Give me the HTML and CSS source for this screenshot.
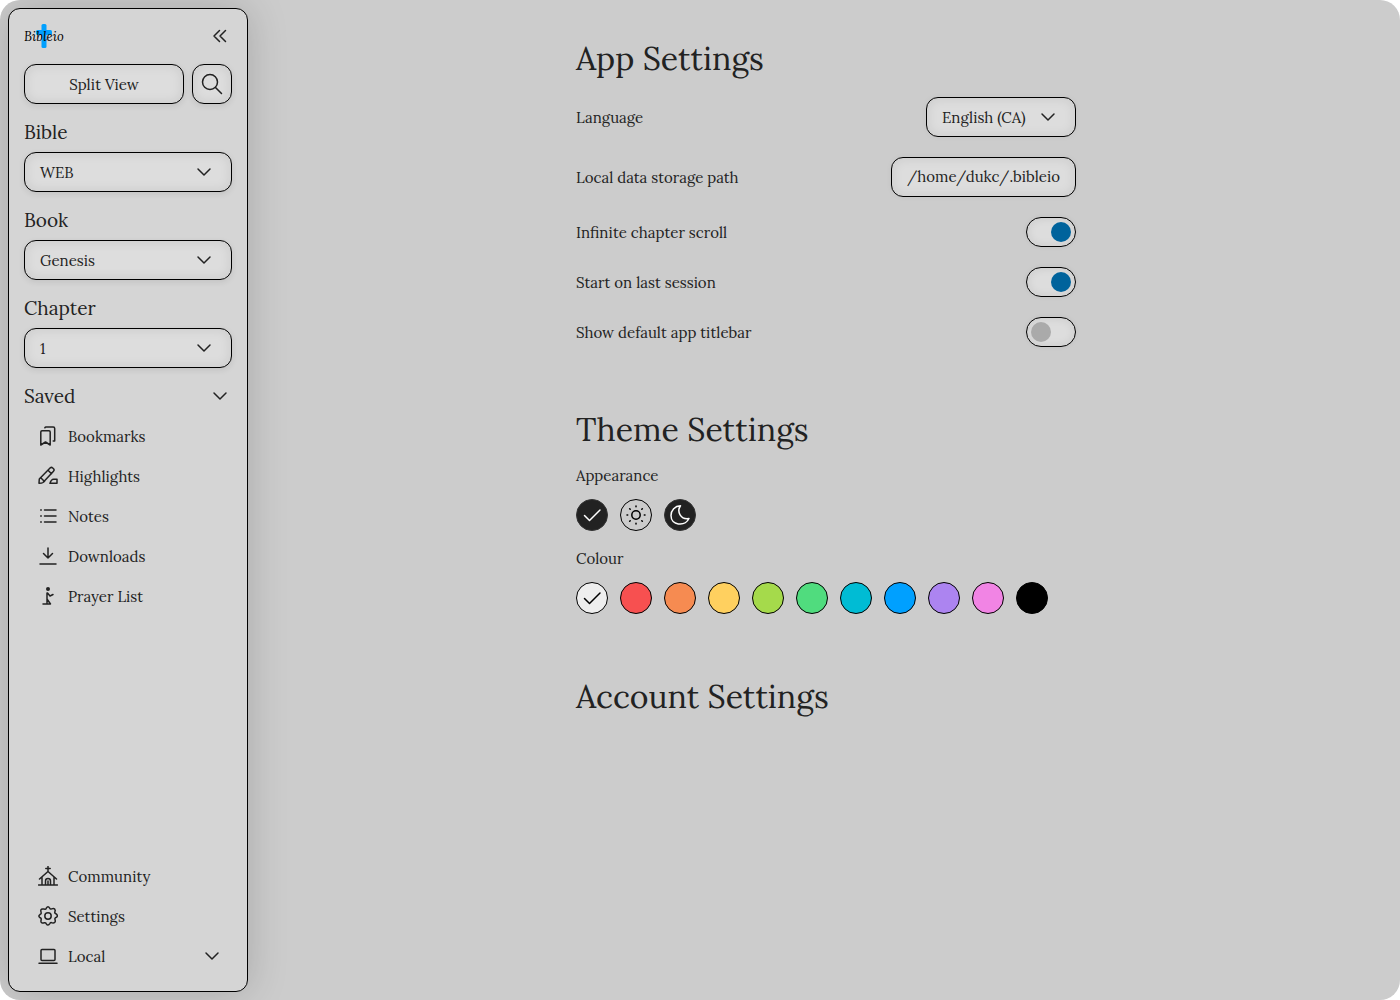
FILE: index.html
```html
<!DOCTYPE html>
<html lang="en">
<head>
<meta charset="utf-8">
<title>Bibleio</title>
<link rel="stylesheet" href="styles.css">
</head>
<body>
<svg class="defs" aria-hidden="true">
  <symbol id="chevron" viewBox="0 0 16 16"><path d="M2 5l6 6 6-6"/></symbol>
  <symbol id="check" viewBox="0 0 20 20"><path d="M2.500 10.500l5 5L18 5"/></symbol>
</svg>
<div class="app">
  <aside class="sidebar">
    <header class="brand">
      <div class="logo"><svg class="cross" viewBox="0 0 16 24"><rect x="5.500" width="5" height="24" rx="1.500"/><rect y="6" width="16" height="5" rx="1.500"/></svg><span>Bibleio</span></div>
      <svg class="icon collapse" viewBox="0 0 16 16"><path d="M7.500 2.500L2 8l5.500 5.500M13.500 2.500L8 8l5.500 5.500"/></svg>
    </header>
    <div class="actions">
      <button class="control split"><span>Split View</span></button>
      <button class="control search" aria-label="Search"><svg class="icon" viewBox="0 0 24 24"><circle cx="10" cy="10" r="7.500"/><path d="M15.500 15.500l6 6"/></svg></button>
    </div>
    <section class="field"><h2>Bible</h2><button class="control select"><span>WEB</span><svg class="icon chev"><use href="#chevron"/></svg></button></section>
    <section class="field"><h2>Book</h2><button class="control select"><span>Genesis</span><svg class="icon chev"><use href="#chevron"/></svg></button></section>
    <section class="field"><h2>Chapter</h2><button class="control select"><span>1</span><svg class="icon chev"><use href="#chevron"/></svg></button></section>
    <div class="saved"><h2>Saved</h2><svg class="icon chev"><use href="#chevron"/></svg></div>
    <nav class="menu">
      <a><svg class="icon" viewBox="0 0 20 20"><path d="M2.800 6q0-1.200 1.200-1.200h7q1.200 0 1.200 1.200v13l-4.700-3-4.700 3zM6.800 1.800q.4-.8 1.200-.8h7.200q1.500 0 1.500 1.500v12.400H15.200"/></svg><span>Bookmarks</span></a>
      <a><svg class="icon" viewBox="0 0 20 20"><path d="M1 17.300l.3-4.300L12.300 1.800q1.200-1 2.400.2l.8.800q1.200 1.200 0 2.400L5 16.500q-1 .8-4 .8zM10 4.200l3.500 3.500M2.500 11.500l4 4M12 17.300h7v-4h-3.500q-2.200 0-3.500 4z"/></svg><span>Highlights</span></a>
      <a><svg class="icon" viewBox="0 0 20 20"><path d="M6.500 4h11.500M6.500 10h11.500M6.500 16h11.500M2.700 4h.6M2.700 10h.6M2.700 16h.6"/></svg><span>Notes</span></a>
      <a><svg class="icon" viewBox="0 0 20 20"><path d="M10 2v10M5.500 7.500L10 12l4.500-4.500M2 18h16"/></svg><span>Downloads</span></a>
      <a><svg class="icon" viewBox="0 0 20 20"><circle class="solid" cx="10" cy="3" r="2"/><path d="M9 7v6l3.500 5H5M9 13v5M9.500 7l2.500 3 3-1.500"/></svg><span>Prayer List</span></a>
    </nav>
    <nav class="menu bottom">
      <a><svg class="icon" viewBox="0 0 20 20"><path d="M10 .5v5M7.800 2.500h4.400M1.500 13L10 5.500l8.500 7.500M4 11v8M16 11v8M.5 19h19M7.500 19v-4q0-2.500 2.500-2.500t2.500 2.500v4M10 15V19"/></svg><span>Community</span></a>
      <a><svg class="icon" viewBox="0 0 20 20"><circle cx="10" cy="10" r="3.200"/><path d="M8.300 2.200Q10-.5 11.700 2.200q.5 1.200 1.900.7 3.300-1 3.500 1.300.1.700-.2 1.500-.5 1.500.9 2Q20.500 9.500 18.500 11.300q-2 .5-1.500 2.200 1 3.300-1.700 3.400l-1.500-.2q-1.500-.5-2 .9Q10 20.500 8.300 17.800q-.5-1.500-2-1-3.200 1-3.400-1.500l.2-1.500q.5-1.500-.9-2-2.700-1.700 0-3.500 1.400-.6.9-2-1-3.300 1.500-3.400l1.700.2q1.500.5 2-.9z"/></svg><span>Settings</span></a>
      <a><svg class="icon" viewBox="0 0 20 20"><rect x="3" y="3.500" width="14" height="11" rx="1"/><path d="M1 17.300h18"/></svg><span>Local</span><svg class="icon chev end"><use href="#chevron"/></svg></a>
    </nav>
  </aside>
  <main class="content">
    <div class="settings">
      <section class="group">
        <h1>App Settings</h1>
        <div class="row tall"><span>Language</span><button class="control language"><span>English (CA)</span><svg class="icon chev"><use href="#chevron"/></svg></button></div>
        <div class="row tall"><span>Local data storage path</span><div class="control path">/home/dukc/.bibleio</div></div>
        <div class="row"><span>Infinite chapter scroll</span><div class="toggle on"><i></i></div></div>
        <div class="row"><span>Start on last session</span><div class="toggle on"><i></i></div></div>
        <div class="row"><span>Show default app titlebar</span><div class="toggle"><i></i></div></div>
      </section>
      <section class="group theme">
        <h1>Theme Settings</h1>
        <h3>Appearance</h3>
        <div class="swatches">
          <button class="swatch dark"><svg class="icon"><use href="#check"/></svg></button>
          <button class="swatch light"><svg class="icon" viewBox="0 0 20 20"><circle cx="10" cy="10" r="4.200"/><path d="M10 1v.7M10 18.300v.7M1 10h.7M18.300 10h.7M3.700 3.700l.5.5M15.800 15.800l.5.5M3.700 16.300l.5-.5M15.800 4.200l.5-.5"/></svg></button>
          <button class="swatch dark"><svg class="icon" viewBox="0 0 20 20"><path d="M10.500.8C6.500 6.500 10.500 14.800 19 13.500 14.500 22 1 20.500 1 10.500 1 5 5 1 10.500.8z"/></svg></button>
        </div>
        <h3>Colour</h3>
        <div class="swatches">
          <button class="swatch white"><svg class="icon"><use href="#check"/></svg></button>
          <button class="swatch red"></button><button class="swatch orange"></button><button class="swatch yellow"></button><button class="swatch lime"></button><button class="swatch green"></button><button class="swatch cyan"></button><button class="swatch blue"></button><button class="swatch purple"></button><button class="swatch pink"></button><button class="swatch black"></button>
        </div>
      </section>
      <section class="group account"><h1>Account Settings</h1></section>
    </div>
  </main>
</div>
</body>
</html>
```
FILE: styles.css
```css
* { box-sizing: border-box; }
body { margin: 0; background: #fff; color: #222; font: 15px/24px Lora, "Liberation Serif", serif; }
h1, h2, h3 { margin: 0; font-weight: 400; }
button { font: inherit; color: inherit; }
.defs { display: none; }
.app { display: flex; height: 1000px; padding: 8px; background: #ccc; border-radius: 20px; overflow: hidden; }
.sidebar { display: flex; flex-direction: column; width: 240px; padding: 15px; background: #d5d5d5; border: 1px solid #000; border-radius: 12px; box-shadow: 0 0 40px rgba(0, 0, 0, .18); }
.icon { display: block; flex: none; width: 20px; height: 20px; fill: none; stroke: currentColor; stroke-width: 1.5; stroke-linecap: round; stroke-linejoin: round; }
.icon .solid { fill: currentColor; stroke: none; }
.icon.chev { width: 16px; height: 16px; }
.brand { display: flex; align-items: center; justify-content: space-between; height: 24px; }
.logo { display: grid; align-items: center; width: 42px; height: 24px; color: #000; font-size: 13px; line-height: 22px; font-style: italic; }
.logo > * { grid-area: 1 / 1; }
.logo span { padding-top: 2px; }
.cross { width: 16px; height: 24px; margin-left: 11.5px; fill: #00a0ff; }
.collapse { width: 16px; height: 16px; margin-right: 4px; }
.actions { display: flex; gap: 8px; margin-top: 16px; }
.control { display: flex; align-items: center; height: 40px; padding: 0 15px; background: #ddd; border: 1px solid #000; border-radius: 12px; box-shadow: 0 2px 6px rgba(0, 0, 0, .09), inset 0 0 12px rgba(0, 0, 0, .09); }
.control span, .row > span, .menu span { padding-top: 2px; }
.split { flex: 1; justify-content: center; }
.search { width: 40px; padding: 0; justify-content: center; }
.search .icon { width: 24px; height: 24px; }
.field { margin-top: 16px; }
h2 { font-size: 19px; line-height: 24px; }
.select { width: 100%; margin-top: 8px; padding-right: 19px; justify-content: space-between; }
.saved { display: flex; align-items: center; justify-content: space-between; height: 24px; margin-top: 16px; padding-right: 4px; }
.menu { display: flex; flex-direction: column; margin-top: 8px; }
.menu a { display: flex; align-items: center; gap: 10px; height: 40px; padding: 0 12px 0 14px; }
.bottom { margin-top: auto; }
.end { margin-left: auto; }
.content { display: flex; flex: 1; justify-content: center; padding-top: 27px; }
.settings { width: 500px; margin-left: 12px; }
h1 { height: 48px; font-size: 32px; line-height: 48px; }
.row { display: flex; align-items: center; justify-content: space-between; height: 30px; margin-top: 20px; }
.row.tall { height: 40px; }
h1 + .row { margin-top: 14px; }
.language, .path { box-shadow: 0 0 6px rgba(0, 0, 0, .04), inset 0 0 12px rgba(0, 0, 0, .09); }
.language { width: 150px; padding-right: 19px; justify-content: space-between; }
.path { width: 185px; }
.toggle { width: 50px; height: 30px; padding: 4px; background: #ddd; border: 1px solid #000; border-radius: 15px; box-shadow: 0 0 5px rgba(0, 0, 0, .06), inset 0 0 10px rgba(0, 0, 0, .09); }
.toggle i { display: block; width: 20px; height: 20px; background: #aaa; border-radius: 50%; }
.toggle.on i { margin-left: auto; background: #00639c; }
.theme { margin-top: 59px; }
h3 { height: 24px; margin-top: 10px; font-size: 15px; }
.swatches { display: flex; gap: 12px; margin-top: 11px; }
.swatches + h3 { margin-top: 16px; }
.swatch { display: flex; align-items: center; justify-content: center; width: 32px; height: 32px; padding: 0; border: 1px solid #000; border-radius: 50%; color: #000; }
.dark { background: #222; border-color: #333; color: #fff; }
.light { background: #ccc; }
.white { background: #eee; }
.red { background: #f75050; }
.orange { background: #f68b51; }
.yellow { background: #ffd05f; }
.lime { background: #a5da4b; }
.green { background: #50dc7e; }
.cyan { background: #00bcd4; }
.blue { background: #00a0ff; }
.purple { background: #ac84f0; }
.pink { background: #f184e4; }
.black { background: #000; }
.account { margin-top: 59px; }
```
